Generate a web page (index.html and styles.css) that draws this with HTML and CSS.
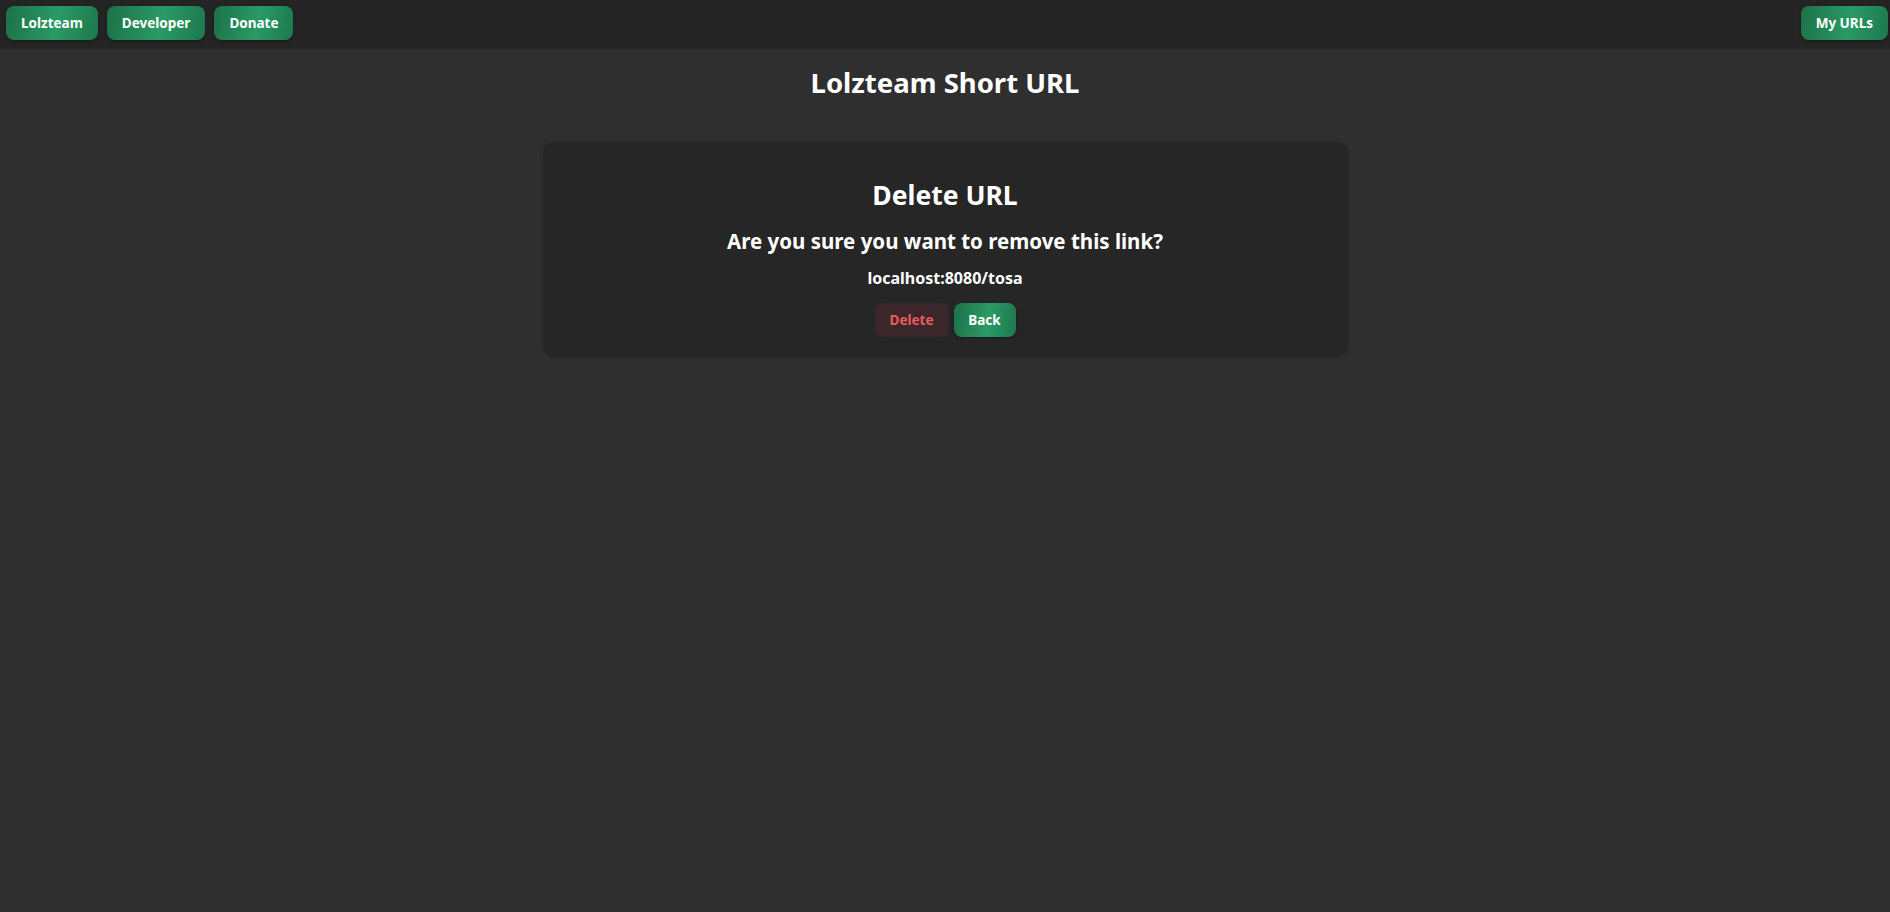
FILE: index.html
```html
<!DOCTYPE html>
<html lang="en">
<head>
	<meta charset="UTF-8" />
	<meta name="viewport" content="width=device-width, initial-scale=1.0" />
	<title>Lolzteam Short URL</title>
	<link rel="stylesheet" href="styles.css">
</head>
<body>
	<header class="topbar">
		<nav class="nav-left">
			<a class="btn" href="#">Lolzteam</a>
			<a class="btn" href="#">Developer</a>
			<a class="btn" href="#">Donate</a>
		</nav>
		<a class="btn" href="#">My URLs</a>
	</header>

	<h1 class="page-title">Lolzteam Short URL</h1>

	<div class="card">
		<h2>Delete URL</h2>
		<h3>Are you sure you want to remove this link?</h3>
		<p class="link">localhost:8080/tosa</p>
		<div class="actions">
			<button class="btn btn-danger">Delete</button>
			<a class="btn btn-back" href="#">Back</a>
		</div>
	</div>
</body>
</html>
```

FILE: styles.css
```css
* {
	padding: 0;
	margin: 0;
	box-sizing: border-box;
}

body {
	min-height: 100vh;
	background-color: #2f2f2f;
	color: #fff;
	font-family: "Noto Sans", "Liberation Sans", sans-serif;
	font-weight: 700;
}

/* 顶部导航 */
.topbar {
	display: flex;
	justify-content: space-between;
	height: 49px;
	padding: 6px 2px 0 6px;
	background-color: #242424;
}

.nav-left {
	display: flex;
	gap: 9px;
}

.btn {
	display: inline-flex;
	align-items: center;
	justify-content: center;
	height: 34px;
	padding: 0 15px;
	border: 0;
	border-radius: 8px;
	font-family: inherit;
	font-size: 13.5px;
	font-weight: 700;
	color: #fff;
	text-decoration: none;
	background: linear-gradient(100deg, #1d7148 0%, #2a9a65 55%, #1d784d 100%);
	box-shadow: 0 1px 3px rgba(0, 0, 0, .35);
	cursor: pointer;
}

.page-title {
	margin: 17px 0 43px;
	font-size: 27.5px;
	line-height: 33px;
	text-align: center;
}

/* 卡片 */
.card {
	width: 805px;
	margin: 0 auto;
	padding: 37px 20px 20px;
	border-radius: 12px;
	background-color: #262626;
	box-shadow: 0 0 4px rgba(0, 0, 0, .15);
	text-align: center;
}

.card h2 {
	font-size: 26.5px;
	line-height: 32px;
}

.card h3 {
	margin-top: 17px;
	font-size: 20.5px;
	line-height: 26px;
}

.card .link {
	margin-top: 14px;
	font-size: 16px;
	line-height: 20px;
}

.actions {
	display: flex;
	justify-content: center;
	gap: 5px;
	margin-top: 15px;
}

.btn-danger {
	width: 74px;
	color: #ea5a63;
	background: #3b2629;
	box-shadow: none;
}

.btn-back {
	width: 62px;
}
```
